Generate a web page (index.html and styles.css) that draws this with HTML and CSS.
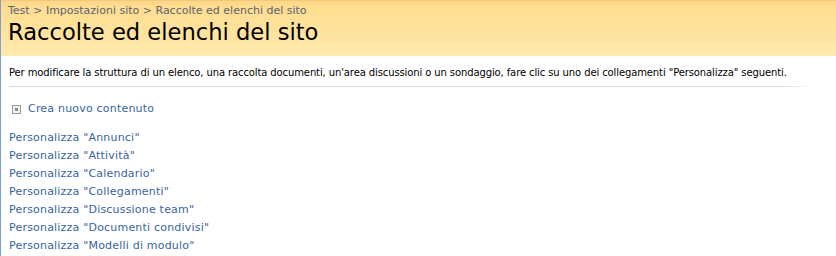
FILE: index.html
```html
<!DOCTYPE html>
<html lang="it">
<head>
<meta charset="utf-8">
<link rel="stylesheet" href="styles.css">
</head>
<body>
<div class="page">
  <div class="header">
    <div class="crumbs"><a href="#">Test</a> &gt; <a href="#">Impostazioni sito</a> &gt; Raccolte ed elenchi del sito</div>
    <h1 class="title">Raccolte ed elenchi del sito</h1>
  </div>
  <div class="content">
    <p class="desc">Per modificare la struttura di un elenco, una raccolta documenti, un'area discussioni o un sondaggio, fare clic su uno dei collegamenti "Personalizza" seguenti.</p>
    <div class="sep"></div>
    <div class="create">
      <span class="icon"><span class="inner"></span></span>
      <a href="#">Crea nuovo contenuto</a>
    </div>
    <ul class="links">
      <li><a href="#">Personalizza "Annunci"</a></li>
      <li><a href="#">Personalizza "Attività"</a></li>
      <li><a href="#">Personalizza "Calendario"</a></li>
      <li><a href="#">Personalizza "Collegamenti"</a></li>
      <li><a href="#">Personalizza "Discussione team"</a></li>
      <li><a href="#">Personalizza "Documenti condivisi"</a></li>
      <li><a href="#">Personalizza "Modelli di modulo"</a></li>
    </ul>
  </div>
</div>
</body>
</html>
```
FILE: styles.css
```css
html, body {
  margin: 0;
  padding: 0;
  background: #fff;
}
body {
  font-family: "DejaVu Sans", Verdana, sans-serif;
  font-size: 11px;
  color: #000;
}
a {
  text-decoration: none;
  color: #3764a0;
}
.page {
  border-left: 1px solid #7aa0d6;
  min-height: 256px;
}
.header {
  background: linear-gradient(to bottom, #fcd58a 0%, #fedd8e 10%, #ffe5a2 70%, #ffeab0 100%);
  border-top: 1px solid #f4c978;
  height: 56px;
  padding-left: 7px;
  box-sizing: border-box;
}
.crumbs {
  padding-top: 3px;
  color: #5c6373;
  line-height: 14px;
  font-size: 11px;
}
.crumbs a { color: #5c6373; }
.title {
  margin: 1px 0 0;
  font-weight: normal;
  font-size: 22.6px;
  line-height: 27px;
  color: #000;
}
.content {
  padding: 10px 25px 0 8px;
}
.desc {
  margin: 0;
  font-size: 10px;
  line-height: 14px;
  letter-spacing: -0.11px;
}
.sep {
  margin-top: 6px;
  height: 1px;
  background: linear-gradient(to right, #d6d6d6 0%, #d6d6d6 96%, #fff 100%);
}
.create {
  display: flex;
  align-items: center;
  gap: 7px;
  margin-top: 15px;
  padding-left: 3px;
  font-size: 11px;
  line-height: 14px;
  letter-spacing: 0.2px;
}
.icon {
  width: 7px;
  height: 7px;
  border: 1px solid #9a9a9a;
  display: flex;
  align-items: center;
  justify-content: center;
  background: #f4f4f4;
}
.inner {
  width: 3px;
  height: 3px;
  background: #8a8a8a;
}
.links {
  list-style: none;
  margin: 13px 0 0;
  padding: 0;
  font-size: 11px;
  letter-spacing: 0.2px;
  line-height: 18px;
}
```
